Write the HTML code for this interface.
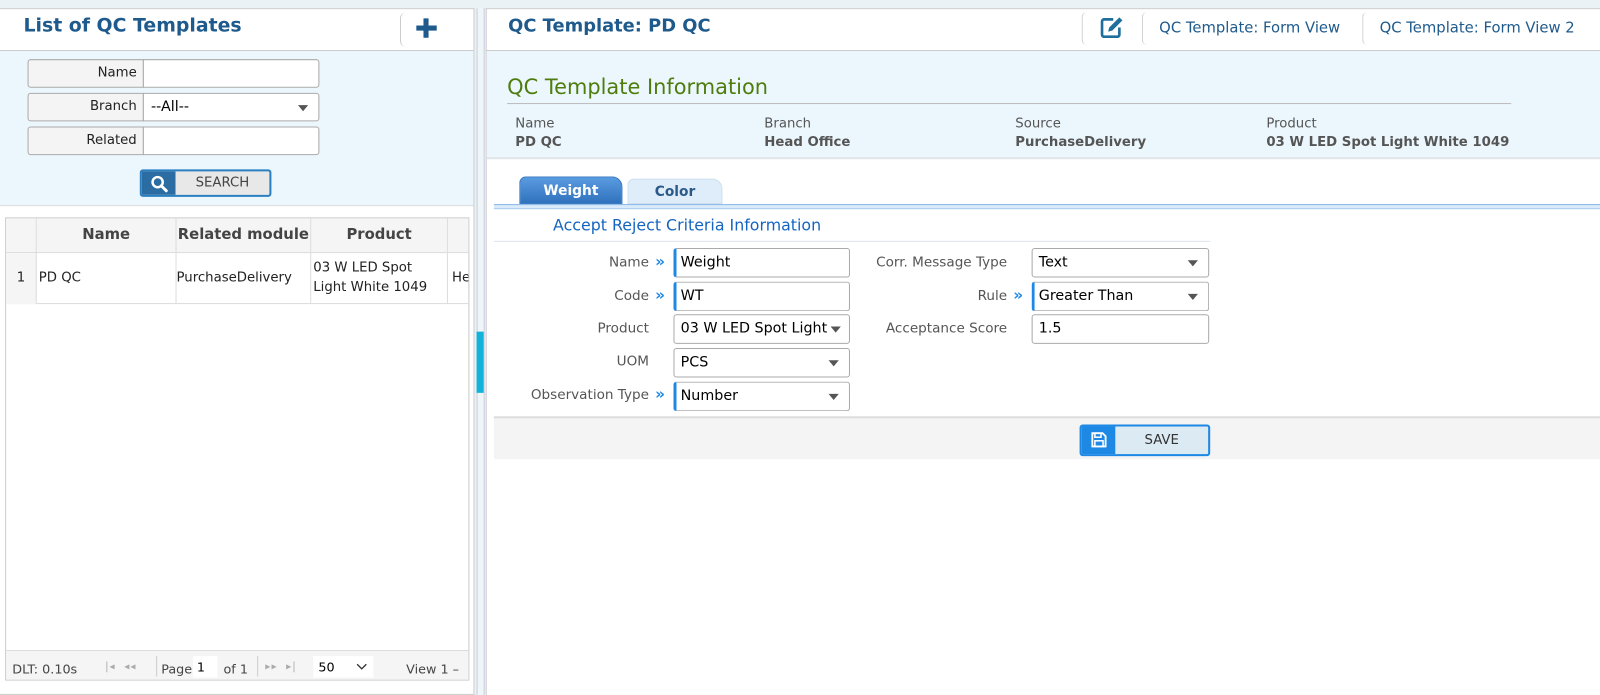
<!DOCTYPE html>
<html><head><meta charset="utf-8"><style>
*{box-sizing:border-box;margin:0;padding:0}
html,body{width:1600px;height:695px;overflow:hidden;background:#eaf2f5;font-family:"DejaVu Sans","Liberation Sans",sans-serif}
#w{position:absolute;left:0;top:0;width:1568px;height:681px;transform:scale(1.0204);transform-origin:0 0}
.a{position:absolute}
.lbl{background:#f4f4f4;border:1px solid #aaa;border-radius:3px 0 0 3px;font-size:13px;color:#222;text-align:right;padding-right:6px;line-height:26px}
.inp{background:#fff;border:1px solid #aaa;border-radius:0 3px 3px 0}
.fl{font-size:13.3px;color:#555;text-align:right;width:220px}
.fi{background:#fff;border:1px solid #aaa;border-radius:3px;font-size:14px;color:#000;padding-left:6px;line-height:27px;white-space:nowrap;overflow:hidden}
.req{border-left:3px solid #1e88e5;padding-left:4px}
.car{position:absolute;right:10px;top:11px;width:0;height:0;border-left:5px solid transparent;border-right:5px solid transparent;border-top:6px solid #555}
.mk{font-size:15px;color:#1e88e5;font-weight:bold}
.th{font-size:14.5px;font-weight:bold;color:#444;text-align:center;line-height:33px;border-right:1px solid #ddd;white-space:nowrap}
.td{font-size:13px;color:#222;border-right:1px solid #ddd}
.il{font-size:13px;color:#555}
.iv{font-size:13px;color:#555;font-weight:bold}
.pg{font-size:12.5px;color:#444}
</style></head><body><div id="w">
<div class="a" style="left:0;top:8px;width:465px;height:673px;background:#fff;border:1px solid #ccc;border-left:none"></div>
<div class="a" style="left:0;top:49px;width:464px;height:1px;background:#ccc"></div>
<div class="a" style="left:23px;top:15px;font-size:18.5px;font-weight:bold;color:#1f5a8c">List of QC Templates</div>
<div class="a" style="left:392px;top:12px;width:50px;height:34px;border-left:1px solid #ccc;border-radius:6px 0 0 6px"></div>
<div class="a" style="left:408px;top:25px;width:20px;height:5px;background:#1f5a8c"></div>
<div class="a" style="left:415px;top:18px;width:5px;height:19px;background:#1f5a8c"></div>
<div class="a" style="left:0;top:50px;width:464px;height:152px;background:#ecf7fd;border-bottom:1px solid #ddd"></div>
<div class="a lbl" style="left:27px;top:58px;width:114px;height:28px">Name</div>
<div class="a inp" style="left:140px;top:58px;width:173px;height:28px"></div>
<div class="a lbl" style="left:27px;top:91px;width:114px;height:28px">Branch</div>
<div class="a inp" style="left:140px;top:91px;width:173px;height:28px;font-size:14px;line-height:26px;padding-left:7px">--All--<span class="car"></span></div>
<div class="a lbl" style="left:27px;top:124px;width:114px;height:28px">Related</div>
<div class="a inp" style="left:140px;top:124px;width:173px;height:28px"></div>
<div class="a" style="left:137px;top:166px;width:129px;height:27px;border:2px solid #2a7fc1;border-radius:3px;background:#e8e8e8;overflow:hidden">
<div class="a" style="left:0;top:0;width:33px;height:23px;background:#2b6ca3"></div>
<svg class="a" style="left:8px;top:3px" width="18" height="18" viewBox="0 0 18 18"><circle cx="7.5" cy="7.5" r="5" fill="none" stroke="#fff" stroke-width="2.4"/><path d="M11 11l5 5" stroke="#fff" stroke-width="2.8" stroke-linecap="round"/></svg>
<div class="a" style="left:33px;top:0;width:92px;line-height:23px;text-align:center;font-size:13px;color:#444">SEARCH</div></div>
<div class="a" style="left:5px;top:213px;width:455px;height:454px;border:1px solid #ccc;background:#fff;overflow:hidden">
<div class="a" style="left:0;top:0;width:455px;height:34px;background:#f5f5f5;border-bottom:1px solid #ddd"></div>
<div class="a th" style="left:0;top:0;width:30px;height:34px"></div>
<div class="a th" style="left:30px;top:0;width:137px">Name</div>
<div class="a th" style="left:167px;top:0;width:132px">Related module</div>
<div class="a th" style="left:299px;top:0;width:134px">Product</div>
<div class="a" style="left:0;top:34px;width:455px;height:50px;border-bottom:1px solid #ddd"></div>
<div class="a td" style="left:0;top:34px;width:30px;height:50px;background:#f5f5f5;text-align:center;line-height:50px">1</div>
<div class="a td" style="left:30px;top:34px;width:137px;height:50px;line-height:50px;padding-left:2px">PD QC</div>
<div class="a td" style="left:167px;top:34px;width:132px;height:50px;line-height:50px;padding-left:0px;white-space:nowrap">PurchaseDelivery</div>
<div class="a td" style="left:299px;top:34px;width:134px;height:50px;padding:5px 2px;line-height:19px">03 W LED Spot Light White 1049</div>
<div class="a td" style="left:433px;top:34px;width:30px;height:50px;line-height:50px;padding-left:4px">He</div>
<div class="a" style="left:0;top:423px;width:455px;height:31px;background:#f5f5f5;border-top:1px solid #ddd"></div>
</div>
<div class="a pg" style="left:12px;top:648px">DLT: 0.10s</div>
<div class="a" style="left:103px;top:648px;font-size:10px;color:#aaa;letter-spacing:1px">|◂ &nbsp;◂◂</div>
<div class="a" style="left:153px;top:643px;width:1px;height:20px;background:#ccc"></div>
<div class="a pg" style="left:158px;top:648px">Page</div>
<div class="a" style="left:189px;top:643px;width:24px;height:21px;background:#fff;font-size:12.5px;line-height:21px;padding-left:4px">1</div>
<div class="a pg" style="left:219px;top:648px">of 1</div>
<div class="a" style="left:252px;top:643px;width:1px;height:20px;background:#ccc"></div>
<div class="a" style="left:260px;top:648px;font-size:10px;color:#aaa;letter-spacing:1px">▸▸ &nbsp;▸|</div>
<div class="a" style="left:307px;top:643px;width:59px;height:21px;background:#fff;font-size:12.5px;line-height:21px;padding-left:5px">50<svg class="a" style="right:6px;top:7px" width="11" height="7" viewBox="0 0 11 7"><path d="M1 1l4.5 4.5L10 1" fill="none" stroke="#333" stroke-width="1.3"/></svg></div>
<div class="a pg" style="left:398px;top:648px">View 1 –</div>
<div class="a" style="left:467px;top:8px;width:8px;height:673px;background:#eef6f9;border-left:1px solid #ccd;border-right:1px solid #ccd"></div>
<div class="a" style="left:467px;top:325px;width:7px;height:60px;background:#12b2d9"></div>
<div class="a" style="left:476px;top:8px;width:1092px;height:673px;background:#fff;border-top:1px solid #ccc;border-left:1px solid #ccc"></div>
<div class="a" style="left:476px;top:49px;width:1092px;height:1px;background:#ccc"></div>
<div class="a" style="left:498px;top:16px;font-size:17.5px;font-weight:bold;color:#1f5a8c">QC Template: PD QC</div>
<div class="a" style="left:1060px;top:12px;width:10px;height:32px;border-left:1px solid #ccc;border-radius:5px 0 0 5px"></div>
<svg class="a" style="left:1077px;top:15px" width="26" height="24" viewBox="0 0 26 24"><path d="M14 4H5a2 2 0 0 0-2 2v13a2 2 0 0 0 2 2h13a2 2 0 0 0 2-2v-7" fill="none" stroke="#1f6f9c" stroke-width="2.6"/><path d="M9 16l1-4 10-10 3 3-10 10z" fill="#1f6f9c"/></svg>
<div class="a" style="left:1119px;top:12px;width:10px;height:32px;border-left:1px solid #ccc;border-radius:5px 0 0 5px"></div>
<div class="a" style="left:1136px;top:20px;font-size:14.5px;color:#1f5a8c">QC Template: Form View</div>
<div class="a" style="left:1335px;top:12px;width:10px;height:32px;border-left:1px solid #ccc;border-radius:5px 0 0 5px"></div>
<div class="a" style="left:1352px;top:20px;font-size:14.5px;color:#1f5a8c">QC Template: Form View 2</div>
<div class="a" style="left:477px;top:50px;width:1091px;height:106px;background:#ecf7fd;border-bottom:2px solid #e2e6e8"></div>
<div class="a" style="left:497px;top:73px;font-size:20.5px;color:#4e7d0e">QC Template Information</div>
<div class="a" style="left:497px;top:101px;width:984px;height:1px;background:#bbb"></div>
<div class="a il" style="left:505px;top:114px">Name</div><div class="a iv" style="left:505px;top:132px">PD QC</div>
<div class="a il" style="left:749px;top:114px">Branch</div><div class="a iv" style="left:749px;top:132px">Head Office</div>
<div class="a il" style="left:995px;top:114px">Source</div><div class="a iv" style="left:995px;top:132px">PurchaseDelivery</div>
<div class="a il" style="left:1241px;top:114px">Product</div><div class="a iv" style="left:1241px;top:132px">03 W LED Spot Light White 1049</div>
<div class="a" style="left:509px;top:173px;width:101px;height:27px;background:linear-gradient(#5a9be0,#3072bd);border:1px solid #3a7cc4;border-radius:6px 10px 0 0;color:#fff;font-weight:bold;font-size:13.5px;text-align:center;line-height:27px">Weight</div>
<div class="a" style="left:615px;top:175px;width:93px;height:25px;background:#deedf9;border:1px solid #cde0f0;border-radius:6px 10px 0 0;color:#2b5a8a;font-weight:bold;font-size:13.5px;text-align:center;line-height:25px">Color</div>
<div class="a" style="left:484px;top:200px;width:1084px;height:5px;border-top:1px solid #8db8e6;border-bottom:1px solid #a9cbee;background:#d9eafa"></div>
<div class="a" style="left:542px;top:212px;font-size:15.5px;color:#1565c0">Accept Reject Criteria Information</div>
<div class="a" style="left:484px;top:236px;width:702px;height:1px;background:#dde3ea"></div>
<div class="a fl" style="left:416px;top:250px">Name</div><div class="a mk" style="left:642px;top:247px">»</div>
<div class="a fi req" style="left:660px;top:243px;width:173px;height:29px">Weight</div>
<div class="a fl" style="left:416px;top:283px">Code</div><div class="a mk" style="left:642px;top:280px">»</div>
<div class="a fi req" style="left:660px;top:276px;width:173px;height:29px">WT</div>
<div class="a fl" style="left:416px;top:315px">Product</div>
<div class="a fi" style="left:660px;top:308px;width:173px;height:29px;padding-right:20px">03 W LED Spot Light<span class="car" style="right:8px"></span></div>
<div class="a fl" style="left:416px;top:347px">UOM</div>
<div class="a fi" style="left:660px;top:341px;width:173px;height:29px">PCS<span class="car"></span></div>
<div class="a fl" style="left:416px;top:380px">Observation Type</div><div class="a mk" style="left:642px;top:377px">»</div>
<div class="a fi req" style="left:660px;top:374px;width:173px;height:29px">Number<span class="car"></span></div>
<div class="a fl" style="left:767px;top:250px">Corr. Message Type</div>
<div class="a fi" style="left:1011px;top:243px;width:174px;height:29px">Text<span class="car"></span></div>
<div class="a fl" style="left:767px;top:283px">Rule</div><div class="a mk" style="left:993px;top:280px">»</div>
<div class="a fi req" style="left:1011px;top:276px;width:174px;height:29px">Greater Than<span class="car"></span></div>
<div class="a fl" style="left:767px;top:315px">Acceptance Score</div>
<div class="a fi" style="left:1011px;top:308px;width:174px;height:29px">1.5</div>
<div class="a" style="left:484px;top:408px;width:1084px;height:42px;background:#f4f4f4;border-top:2px solid #ddd"></div>
<div class="a" style="left:1058px;top:416px;width:128px;height:31px;border:2px solid #1e88e5;border-radius:3px;background:#dceaf3;overflow:hidden">
<div class="a" style="left:0;top:0;width:33px;height:27px;background:#1e88e5"></div>
<svg class="a" style="left:9px;top:5px" width="16" height="16" viewBox="0 0 16 16"><path d="M1.5 1.5h10l3 3v10h-13z" fill="none" stroke="#fff" stroke-width="1.8"/><rect x="4" y="1.5" width="6" height="4" fill="none" stroke="#fff" stroke-width="1.5"/><rect x="4" y="9" width="8" height="5.5" fill="none" stroke="#fff" stroke-width="1.5"/></svg>
<div class="a" style="left:33px;top:0;width:91px;line-height:27px;text-align:center;font-size:13px;color:#333">SAVE</div></div>
</div></body></html>
